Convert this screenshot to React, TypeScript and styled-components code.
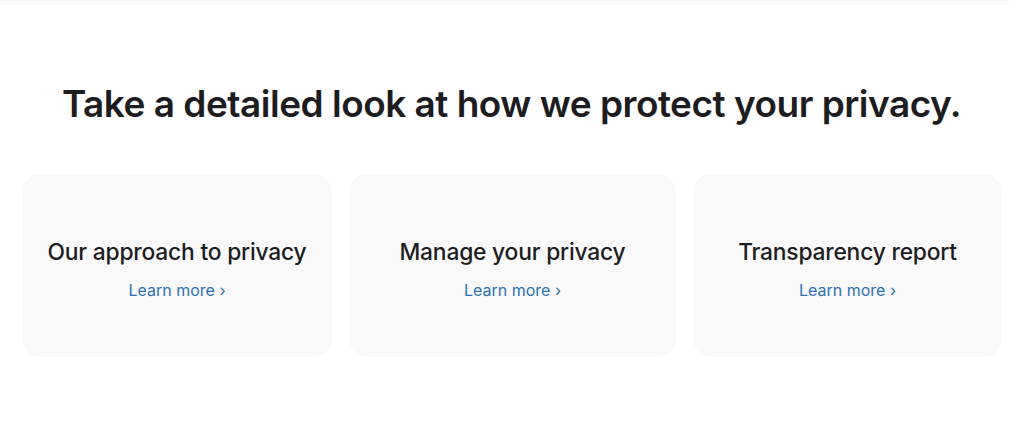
import styled, { createGlobalStyle } from "styled-components";

const GlobalStyle = createGlobalStyle`
  html, body {
    margin: 0;
    padding: 0;
    background: #ffffff;
  }
  body {
    font-family: Inter, "Noto Sans", "Liberation Sans", sans-serif;
    -webkit-font-smoothing: antialiased;
  }
`;

const TopStrip = styled.div`
  height: 5px;
  background: #f9f9f9;
`;

const Section = styled.section`
  padding: 77px 8px 0 22px;
  display: flex;
  flex-direction: column;
  align-items: center;
`;

const Headline = styled.h2`
  margin: 0;
  font-size: 37px;
  line-height: 44px;
  font-weight: 600;
  letter-spacing: -0.5px;
  color: #1d1d1f;
  text-align: center;
`;

const CardGrid = styled.div`
  margin-top: 48px;
  display: grid;
  grid-template-columns: 310px 327px 309px;
  gap: 17px;
  width: 100%;
`;

const Card = styled.div`
  height: 183px;
  border-radius: 18px;
  background: #f9f9f9;
  display: flex;
  flex-direction: column;
  align-items: center;
  justify-content: center;
  gap: 13px;
  padding-top: 8px;
  box-sizing: border-box;
`;

const CardTitle = styled.h3`
  margin: 0;
  font-size: 22.8px;
  line-height: 28px;
  font-weight: 500;
  letter-spacing: -0.2px;
  color: #1d1d1f;
`;

const LearnMore = styled.a`
  font-size: 16px;
  line-height: 22px;
  color: #2f6fb0;
  text-decoration: none;
`;

const cards = [
  "Our approach to privacy",
  "Manage your privacy",
  "Transparency report",
];

export default function App() {
  return (
    <>
      <GlobalStyle />
      <TopStrip />
      <Section>
        <Headline>Take a detailed look at how we protect your privacy.</Headline>
        <CardGrid>
          {cards.map((title) => (
            <Card key={title}>
              <CardTitle>{title}</CardTitle>
              <LearnMore href="#">Learn more ›</LearnMore>
            </Card>
          ))}
        </CardGrid>
      </Section>
    </>
  );
}
